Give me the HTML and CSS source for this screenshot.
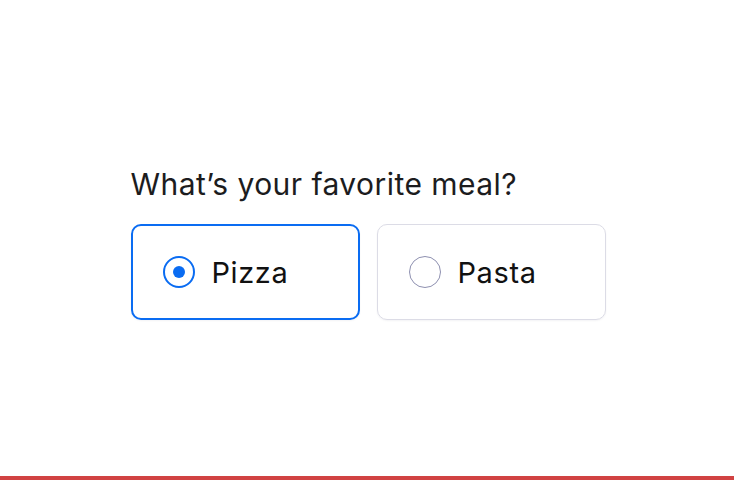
FILE: index.html
```html
<!DOCTYPE html>
<html lang="en">
<head>
    <meta charset="UTF-8">
    <meta name="viewport" content="width=device-width, initial-scale=1.0">
    <title>Favorite Meal</title>
    <link rel="stylesheet" href="styles.css">
</head>
<body>
<!--Question-->
<div class="page">
    <form class="question">
        <p class="title">What’s your favorite meal?</p>
        <div class="choices">
            <label class="choice checked">
                <input type="radio" name="meal" value="pizza" checked>
                <span class="dot"></span>
                Pizza
            </label>
            <label class="choice">
                <input type="radio" name="meal" value="pasta">
                <span class="dot"></span>
                Pasta
            </label>
        </div>
    </form>
</div>
<!--Bottom bar-->
<div class="bar"></div>
</body>
</html>
```

FILE: styles.css
```css
html, body {
    height: 100%;
}
body {
    margin: 0;
    display: flex;
    flex-direction: column;
    background: #fff;
    font-family: Inter, "Noto Sans", sans-serif;
    color: #111;
}
.page {
    flex: 1;
    display: flex;
    justify-content: center;
    padding-top: 166px;
    padding-left: 2px;
}
.title {
    margin: 0 0 22px 0;
    font-size: 30px;
    line-height: 36px;
    color: #1c1c1e;
    letter-spacing: 0.45px;
}
.choices {
    display: flex;
    gap: 17px;
}
.choice {
    box-sizing: border-box;
    width: 229px;
    height: 96px;
    display: flex;
    align-items: center;
    gap: 17px;
    padding-left: 31px;
    border: 1px solid #dcdce6;
    border-radius: 10px;
    font-size: 29px;
    letter-spacing: 0.6px;
    cursor: pointer;
    box-shadow: 0 1px 2px rgba(20, 20, 60, 0.05);
}
.choice.checked {
    border: 2px solid #0a6cf2;
    padding-left: 30px;
}
.choice input {
    display: none;
}
.dot {
    box-sizing: border-box;
    width: 32px;
    height: 32px;
    border-radius: 50%;
    border: 1px solid #8e90b0;
    display: flex;
    align-items: center;
    justify-content: center;
}
.choice.checked .dot {
    border: 2px solid #0a6cf2;
}
.choice.checked .dot::after {
    content: "";
    width: 12px;
    height: 12px;
    border-radius: 50%;
    background: #0a6cf2;
}
.bar {
    height: 4px;
    background: #d14242;
}
```
